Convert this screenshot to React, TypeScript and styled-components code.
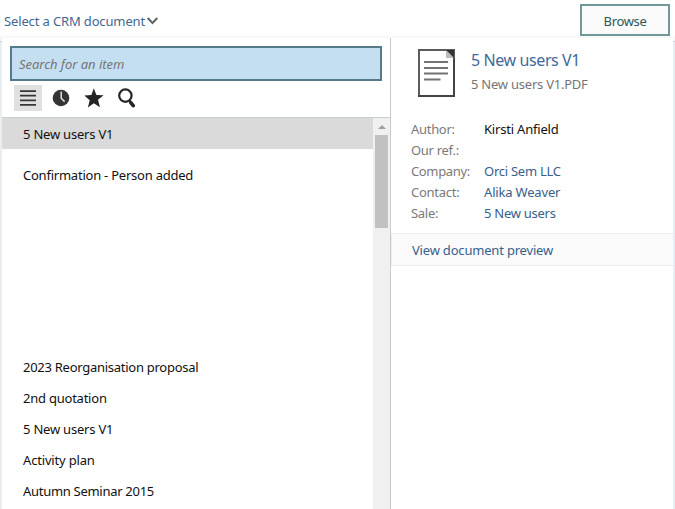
import React from "react";
import styled, { createGlobalStyle } from "styled-components";

const GlobalStyle = createGlobalStyle`
  * { box-sizing: border-box; }
  body {
    margin: 0;
    background: #fff;
    overflow: hidden;
    font-family: "Noto Sans", "Open Sans", sans-serif;
    font-size: 13px;
    color: #111;
  }
`;

const Page = styled.div`
  width: 675px;
  height: 509px;
  display: flex;
  flex-direction: column;
  overflow: hidden;
`;

const TopBar = styled.header`
  height: 38px;
  flex: none;
  display: flex;
  justify-content: space-between;
  padding: 4px 5px 0 4px;
  background: linear-gradient(#fff 0, #fff 34px, #f6f6f6 38px);
`;

const DocumentPicker = styled.div`
  display: flex;
  align-items: center;
  height: 34px;
  color: #3f6792;
  white-space: nowrap;
  svg { margin: 0 0 1px 1px; }
`;

const Label = styled.span<{ $spacing?: number }>`
  letter-spacing: ${({ $spacing = 0 }) => $spacing}px;
  white-space: pre;
`;

const BrowseButton = styled.button`
  width: 90px;
  height: 32px;
  padding: 1px 0 0 0;
  border: 2px solid #6f9a98;
  background: #fafafa;
  color: #28595c;
  font: inherit;
`;

const Body = styled.div`
  flex: 1;
  min-height: 0;
  display: flex;
  padding: 0 2px;
  background: linear-gradient(#f4f6f7 0, #f4f6f7 3px, #cbd2d3 3px, #cbd2d3 4px, #e9eef3 4px);
`;

const Panel = styled.main`
  flex: 1;
  display: flex;
  background: #fff;
`;

const ListPane = styled.section`
  width: 389px;
  flex: none;
  display: flex;
  flex-direction: column;
  border-right: 1px solid #c5cccc;
`;

const SearchBox = styled.input`
  flex: none;
  width: 372px;
  height: 35px;
  margin: 8px 0 0 8px;
  padding: 0 7px;
  border: 2px solid #557b8a;
  border-radius: 0;
  background: #c4dff2;
  font: italic 13px "Noto Sans", sans-serif;
  letter-spacing: -0.04px;
  outline: none;
  &::placeholder { color: #757575; opacity: 1; }
`;

const Tabs = styled.nav`
  flex: none;
  display: flex;
  height: 37px;
  padding: 4px 12px 0;
  gap: 5px;
  border-bottom: 1px solid #c8cdcd;
`;

const Tab = styled.span<{ $active?: boolean }>`
  width: 28px;
  height: 26px;
  display: grid;
  place-items: center;
  background: ${({ $active }) => ($active ? "#e0e0e0" : "transparent")};
`;

const ListArea = styled.div`
  flex: 1;
  min-height: 0;
  display: flex;
`;

const Items = styled.div`
  flex: 1;
  overflow: hidden;
`;

const Item = styled.div<{ $selected?: boolean }>`
  height: 31px;
  padding-left: 21px;
  line-height: 32px;
  background: ${({ $selected }) => ($selected ? "#dadada" : "transparent")};
`;

const Gap = styled.div<{ $size: number }>`
  height: ${({ $size }) => $size}px;
`;

const Scrollbar = styled.div`
  width: 17px;
  background: #f0f0f0;
  display: flex;
  flex-direction: column;
  align-items: center;
`;

const ScrollUp = styled.div`
  height: 17px;
  display: grid;
  place-items: center;
`;

const Thumb = styled.div`
  width: 13px;
  height: 93px;
  background: #c1c1c1;
`;

const DetailPane = styled.section`
  flex: 1;
`;

const DocHeader = styled.div`
  display: flex;
  height: 81px;
  padding: 11px 0 0 27px;
  gap: 16px;
`;

const DocTitle = styled.div`
  height: 22px;
  line-height: 22px;
  font-size: 16px;
  color: #41699a;
`;

const DocFile = styled.div`
  height: 26px;
  line-height: 27px;
  color: #757575;
`;

const Fields = styled.dl`
  display: grid;
  grid-template-columns: 73px 1fr;
  grid-auto-rows: 21px;
  line-height: 21px;
  height: 114px;
  margin: 0;
  padding-left: 20px;
`;

const FieldName = styled.dt`
  color: #7a7a7a;
`;

const FieldValue = styled.dd<{ $link?: boolean }>`
  margin: 0;
  color: ${({ $link }) => ($link ? "#37608c" : "#111")};
`;

const PreviewLink = styled.div`
  height: 33px;
  padding-left: 20px;
  line-height: 32px;
  border: 1px solid #ebeeee;
  border-right: 0;
  background: #fafafa;
  color: #37608c;
`;

const items = [
  { text: "2023 Reorganisation proposal", spacing: -0.27 },
  { text: "2nd quotation", spacing: -0.23 },
  { text: "5 New users V1", spacing: -0.21 },
  { text: "Activity plan", spacing: -0.17 },
  { text: "Autumn Seminar 2015", spacing: -0.29 },
];

const fields = [
  { name: "Author:", value: "Kirsti Anfield", ns: -0.3, vs: -0.2, link: false },
  { name: "Our ref.:", value: "", ns: -0.3, vs: 0, link: false },
  { name: "Company:", value: "Orci Sem LLC", ns: -0.36, vs: -0.25, link: true },
  { name: "Contact:", value: "Alika Weaver", ns: -0.27, vs: -0.18, link: true },
  { name: "Sale:", value: "5 New users", ns: -0.3, vs: -0.27, link: true },
];

const Chevron = () => (
  <svg width="13" height="10" viewBox="0 0 13 10" fill="none" stroke="#606565" strokeWidth="2">
    <path d="M1.7 2l4.8 5 4.8-5" />
  </svg>
);

const ListIcon = () => (
  <svg width="16" height="16" viewBox="0 0 16 16" fill="#343835">
    <path d="M0 .2h16v1.8H0zM0 4.8h16v1.8H0zM0 9.4h16v1.8H0zM0 13.9h16v1.8H0z" />
  </svg>
);

const ClockIcon = () => (
  <svg width="18" height="18" viewBox="0 0 18 18">
    <circle cx="9" cy="9" r="8.3" fill="#343434" />
    <path d="M9.2 2.6v6.6l3.4 3.4" fill="none" stroke="#e0e0e0" strokeWidth="1.5" />
  </svg>
);

const StarIcon = () => (
  <svg width="20" height="20" viewBox="0 0 20 20">
    <path d="M9.8 0.3l2.6 6.6 7.2.3-5.6 4.6 2 7.4-6.2-4-5.9 4.2 1.8-7.2L.3 7.6l7.1-.5z" fill="#242424" />
  </svg>
);

const SearchIcon = () => (
  <svg width="18" height="20" viewBox="0 0 18 20" fill="none" stroke="#242424">
    <circle cx="7.4" cy="7.6" r="6.2" strokeWidth="2.2" />
    <path d="M11.2 12.4l1 1.4" strokeWidth="2" />
    <path d="M12.8 14.6l2.4 3" strokeWidth="3.6" strokeLinecap="round" />
  </svg>
);

const DocumentIcon = () => (
  <svg width="37" height="48" viewBox="0 0 37 48">
    <path d="M1 1h35v46H1z" fill="#fff" stroke="#5c5c5c" strokeWidth="2" />
    <path d="M36 9v38M0 47h37" stroke="#444" strokeWidth="2" />
    <path d="M28 1v8h8z" fill="#bbbbc0" />
    <path d="M28 1h8v8z" fill="#333" />
    <path d="M6 13h24M6 19h24M6 24.5h24M6 30.5h16.5" stroke="#737373" strokeWidth="2" />
  </svg>
);

export default function App() {
  return (
    <>
      <GlobalStyle />
      <Page>
        <TopBar>
          <DocumentPicker>
            <Label $spacing={-0.14}>Select a CRM document</Label>
            <Chevron />
          </DocumentPicker>
          <BrowseButton>
            <Label $spacing={-0.35}>Browse</Label>
          </BrowseButton>
        </TopBar>
        <Body>
          <Panel>
            <ListPane>
              <SearchBox placeholder="Search for an item" />
              <Tabs>
                <Tab $active><ListIcon /></Tab>
                <Tab><ClockIcon /></Tab>
                <Tab><StarIcon /></Tab>
                <Tab><SearchIcon /></Tab>
              </Tabs>
              <ListArea>
                <Items>
                  <Item $selected><Label $spacing={-0.21}>5 New users V1</Label></Item>
                  <Gap $size={10} />
                  <Item><Label $spacing={-0.23}>Confirmation - Person added</Label></Item>
                  <Gap $size={161} />
                  {items.map((item) => (
                    <Item key={item.text}>
                      <Label $spacing={item.spacing}>{item.text}</Label>
                    </Item>
                  ))}
                </Items>
                <Scrollbar>
                  <ScrollUp>
                    <svg width="8" height="4" viewBox="0 0 8 4"><path d="M4 0l4 4H0z" fill="#a0a0a0" /></svg>
                  </ScrollUp>
                  <Thumb />
                </Scrollbar>
              </ListArea>
            </ListPane>
            <DetailPane>
              <DocHeader>
                <DocumentIcon />
                <div>
                  <DocTitle><Label $spacing={-0.4}>5 New users V1</Label></DocTitle>
                  <DocFile><Label $spacing={-0.23}>5 New users V1.PDF</Label></DocFile>
                </div>
              </DocHeader>
              <Fields>
                {fields.map((f) => (
                  <React.Fragment key={f.name}>
                    <FieldName><Label $spacing={f.ns}>{f.name}</Label></FieldName>
                    <FieldValue $link={f.link}><Label $spacing={f.vs}>{f.value}</Label></FieldValue>
                  </React.Fragment>
                ))}
              </Fields>
              <PreviewLink><Label $spacing={-0.19}>View document preview</Label></PreviewLink>
            </DetailPane>
          </Panel>
        </Body>
      </Page>
    </>
  );
}
